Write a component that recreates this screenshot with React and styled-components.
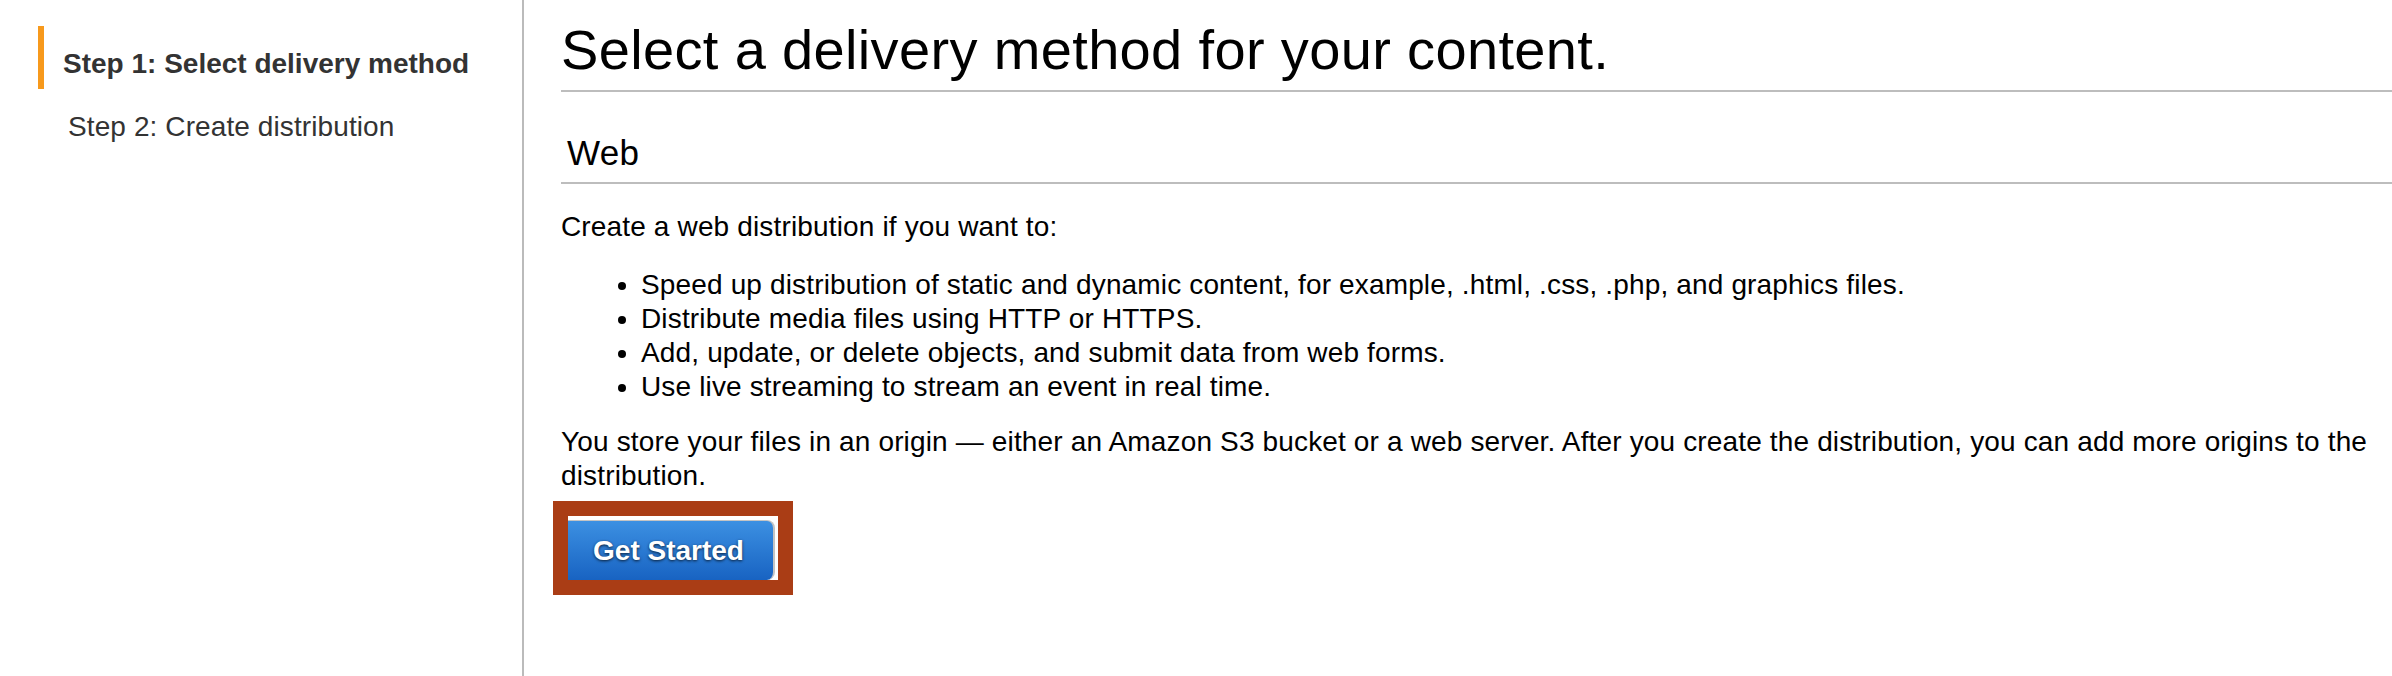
import React from "react";
import styled, { createGlobalStyle } from "styled-components";

const GlobalStyle = createGlobalStyle`
  html, body { margin: 0; padding: 0; background: #fff; }
  body {
    font-family: "Liberation Sans", Arial, Helvetica, sans-serif;
    color: #000;
  }
  * { box-sizing: border-box; }
`;

const Page = styled.div`
  display: flex;
  min-height: 100vh;
`;

const Sidebar = styled.nav`
  flex: 0 0 524px;
  border-right: 2px solid #bbbbbb;
  padding: 26px 0 0 38px;
`;

const NavItem = styled.div`
  border-left: 6px solid ${(p) => (p.$active ? "#f7991c" : "transparent")};
  padding: 21px 0 8px ${(p) => (p.$active ? 19 : 24)}px;
  font-size: 28px;
  line-height: 34px;
  font-weight: ${(p) => (p.$active ? 700 : 400)};
  letter-spacing: ${(p) => (p.$active ? 0 : 0.1)}px;
  color: #333;
  white-space: nowrap;
`;

const Main = styled.main`
  flex: 1;
  min-width: 0;
  padding: 18px 0 40px 37px;
`;

const Title = styled.h1`
  margin: 0;
  padding-bottom: 8px;
  font-size: 56px;
  font-weight: 400;
  line-height: 64px;
  letter-spacing: 0.35px;
  border-bottom: 2px solid #bdbdbd;
`;

const SectionTitle = styled.h2`
  margin: 41px 0 0;
  padding: 0 0 9px 6px;
  font-size: 35px;
  font-weight: 400;
  line-height: 40px;
  letter-spacing: 0.3px;
  border-bottom: 2px solid #bdbdbd;
`;

const Text = styled.p`
  margin: ${(p) => p.$margin || "0"};
  font-size: 28px;
  line-height: 34px;
  letter-spacing: 0.15px;
`;

const List = styled.ul`
  margin: 24px 0 21px;
  padding-left: 80px;
  font-size: 28px;
  line-height: 34px;
  letter-spacing: 0.15px;
`;

const Highlight = styled.div`
  display: inline-flex;
  margin: 8px 0 0 -8px;
  border: 15px solid #aa3d15;
  padding: 4px 3px 0 0;
  background: #fff;
`;

const PrimaryButton = styled.button`
  width: 207px;
  height: 60px;
  padding: 0 4px 0 0;
  border: none;
  border-top: 1px solid #c4c4c4;
  border-right: 2px solid #c4c4c4;
  border-radius: 0 8px 8px 0;
  background: linear-gradient(#3c90e2, #1863c2);
  color: #fff;
  font-family: "Liberation Sans", Arial, Helvetica, sans-serif;
  font-size: 28px;
  font-weight: 700;
  text-shadow: 0 1px 3px rgba(0, 0, 0, 0.75);
  cursor: pointer;
`;

const bullets = [
  "Speed up distribution of static and dynamic content, for example, .html, .css, .php, and graphics files.",
  "Distribute media files using HTTP or HTTPS.",
  "Add, update, or delete objects, and submit data from web forms.",
  "Use live streaming to stream an event in real time.",
];

export default function App() {
  return (
    <>
      <GlobalStyle />
      <Page>
        <Sidebar>
          <NavItem $active>Step 1: Select delivery method</NavItem>
          <NavItem>Step 2: Create distribution</NavItem>
        </Sidebar>
        <Main>
          <Title>Select a delivery method for your content.</Title>
          <SectionTitle>Web</SectionTitle>
          <Text $margin="26px 0 0">Create a web distribution if you want to:</Text>
          <List>
            {bullets.map((b) => (
              <li key={b}>{b}</li>
            ))}
          </List>
          <Text>
            You store your files in an origin — either an Amazon S3 bucket or a web server. After you create the
            distribution, you can add more origins to the distribution.
          </Text>
          <Highlight>
            <PrimaryButton>Get Started</PrimaryButton>
          </Highlight>
        </Main>
      </Page>
    </>
  );
}
